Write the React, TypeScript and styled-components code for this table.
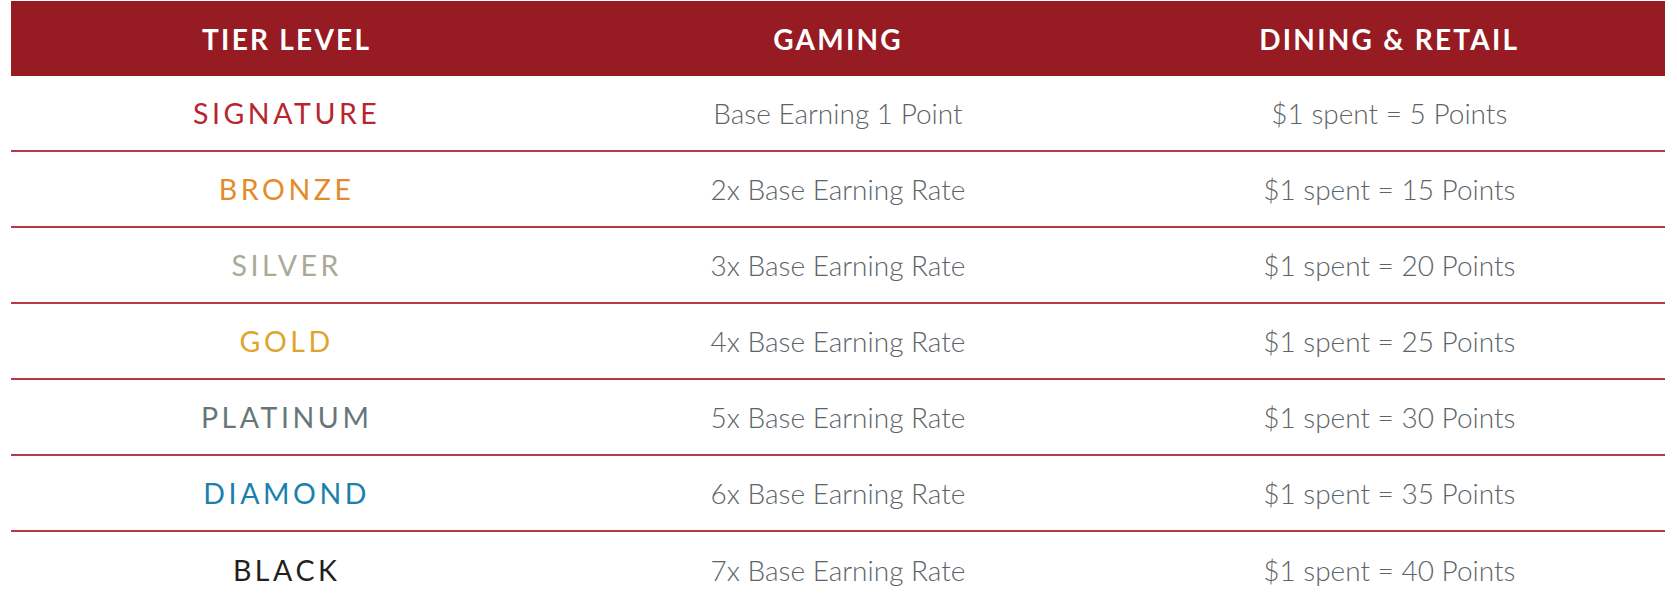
import { FC } from "react";
import styled, { createGlobalStyle } from "styled-components";

const GlobalStyle = createGlobalStyle`
    html, body {
        margin: 0;
        padding: 0;
        background: #ffffff;
    }
    body {
        font-family: Lato, "Noto Sans", sans-serif;
    }
`;

const tiers = [
    { name: 'SIGNATURE', color: '#b8252d', gaming: 'Base Earning 1 Point', dining: '$1 spent = 5 Points' },
    { name: 'BRONZE', color: '#e58a2c', gaming: '2x Base Earning Rate', dining: '$1 spent = 15 Points' },
    { name: 'SILVER', color: '#a9aa96', gaming: '3x Base Earning Rate', dining: '$1 spent = 20 Points' },
    { name: 'GOLD', color: '#dea52a', gaming: '4x Base Earning Rate', dining: '$1 spent = 25 Points' },
    { name: 'PLATINUM', color: '#66777a', gaming: '5x Base Earning Rate', dining: '$1 spent = 30 Points' },
    { name: 'DIAMOND', color: '#1a80ad', gaming: '6x Base Earning Rate', dining: '$1 spent = 35 Points' },
    { name: 'BLACK', color: '#231f20', gaming: '7x Base Earning Rate', dining: '$1 spent = 40 Points' },
];

const Page = styled.div`
    padding: 1px 12px 0 11px;
`;

const Table = styled.div`
    display: flex;
    flex-direction: column;
`;

const Row = styled.div<{ $last?: boolean }>`
    display: grid;
    grid-template-columns: 1fr 1fr 1fr;
    height: 76px;
    box-sizing: border-box;
    border-bottom: ${({ $last }) => ($last ? 'none' : '2px solid #b53a41')};
`;

const HeaderRow = styled.div`
    display: grid;
    grid-template-columns: 1fr 1fr 1fr;
    height: 75px;
    background: #961b22;
`;

const HeaderCell = styled.div`
    display: flex;
    align-items: center;
    justify-content: center;
    color: #ffffff;
    font-weight: 700;
    font-size: 28px;
    letter-spacing: 0.08em;
`;

const Cell = styled.div`
    display: flex;
    align-items: center;
    justify-content: center;
    color: #5c6467;
    font-weight: 300;
    font-size: 28px;
`;

const TierName = styled(Cell)<{ $color: string }>`
    color: ${({ $color }) => $color};
    font-weight: 400;
    font-size: 28.5px;
    letter-spacing: 0.125em;
`;

const App: FC = () => {
    return (
        <Page>
            <GlobalStyle />
            <Table>
                <HeaderRow>
                    <HeaderCell>TIER LEVEL</HeaderCell>
                    <HeaderCell>GAMING</HeaderCell>
                    <HeaderCell>DINING &amp; RETAIL</HeaderCell>
                </HeaderRow>
                {tiers.map((tier, i) => (
                    <Row key={tier.name} $last={i === tiers.length - 1}>
                        <TierName $color={tier.color}>{tier.name}</TierName>
                        <Cell>{tier.gaming}</Cell>
                        <Cell>{tier.dining}</Cell>
                    </Row>
                ))}
            </Table>
        </Page>
    );
};

export default App;
